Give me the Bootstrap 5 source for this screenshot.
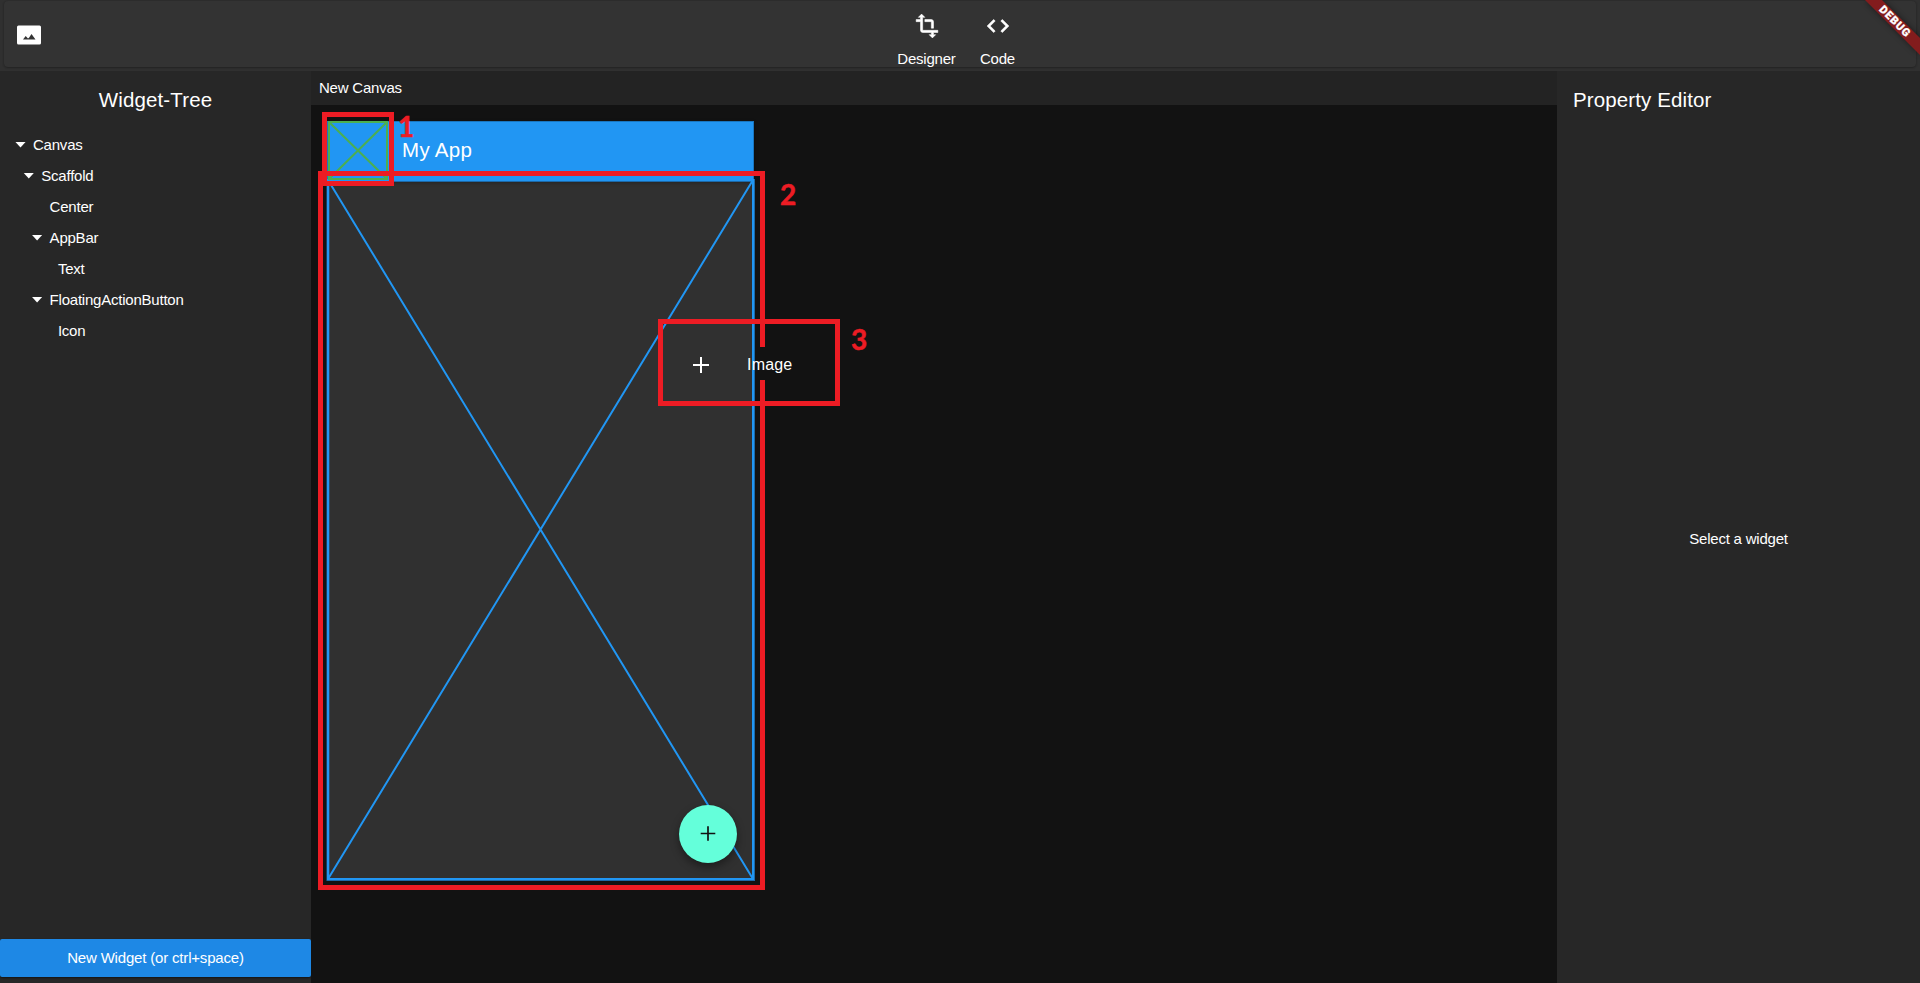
<!DOCTYPE html>
<html lang="en">
<head>
<meta charset="utf-8">
<title>Widget Designer</title>
<link href="https://cdn.jsdelivr.net/npm/bootstrap@5.3.0/dist/css/bootstrap.min.css" rel="stylesheet">
<style>
body{background:#303030;color:#fff;font:15px/20px "Liberation Sans",Arial,sans-serif;letter-spacing:-.22px;}
svg{display:block}
.topbar{height:71px;padding:1px 4px 4px}
.toolbar-card{background:#333;border-radius:4px;box-shadow:0 1px 2px rgba(0,0,0,.22),0 0 2px rgba(0,0,0,.2);padding-left:4px}
.gallery-icon{left:9px;margin-top:.5px}
.tool{padding-top:12px;width:71px}
.tool svg{margin-bottom:10px}
.side{background:#272727}
.left-side{width:311px}
.right-side{width:363px}
.side-title{font-size:20.5px;line-height:24px;letter-spacing:.12px;font-weight:400;padding-top:17px}
.tree-title{margin-bottom:17px}
.property-title{padding-left:16px}
.tree-row{height:31px;line-height:31px;padding-left:calc(15px + var(--lv)*8.3px)}
.caret{width:11px;height:6px;background:#fff;clip-path:polygon(0 0,100% 0,50% 100%);margin-right:7px}
.caret.leaf{visibility:hidden}
.new-widget{height:38px;margin-bottom:6px;background:#1e88e5!important;color:#fff;border:0;border-radius:2px;font:15px/36px "Liberation Sans",Arial,sans-serif;letter-spacing:-.18px;padding:0;box-shadow:0 1px 2px rgba(0,0,0,.5)}
.canvas-head{height:34px;background:#232323;padding:7px 8px}
.stage{background:#121212}
.phone{width:427px;height:759px;margin:16px 0 0 16px;background:#303030}
.app-bar{height:59px;background:#2196f3;font-size:20.5px;line-height:20px;letter-spacing:.3px;padding:0 0 2px 74px;box-shadow:0 2px 4px rgba(0,0,0,.4);border:1px solid #1976c0}
.markup{left:0;top:0}
.fab{right:17px;bottom:17px;width:58px;height:58px;background:#64ffda;box-shadow:0 4px 8px rgba(0,0,0,.4)}
.drag-item{left:381px;top:250px;font-size:16px;gap:37px;letter-spacing:.2px}
.drag-item svg{margin-top:-1px}
.hint{padding-bottom:17px}
.banner{width:80px;height:80px;right:0;top:0}
.note{font:700 28px Lato,"Open Sans",sans-serif;letter-spacing:0}
</style>
<script src="https://cdn.jsdelivr.net/npm/bootstrap@5.3.0/dist/js/bootstrap.bundle.min.js"></script>
</head>
<body class="vh-100 overflow-hidden d-flex flex-column">
<header class="topbar flex-shrink-0">
  <div class="toolbar-card h-100 position-relative d-flex justify-content-center">
    <svg class="gallery-icon position-absolute top-50 translate-middle-y" width="28" height="28" viewBox="0 0 28 28" fill="#fff"><path fill-rule="evenodd" d="M5.500 4.500h21A1.500 1.500 0 0 1 28 6v16a1.500 1.500 0 0 1-1.500 1.500h-21A1.500 1.500 0 0 1 4 22V6a1.500 1.500 0 0 1 1.500-1.500zM10 18.500h12.500l-4-5.500-2.500 3.700-1 .8-2.300-2.500z"/></svg>
    <div class="tool text-center"><svg class="mx-auto" width="26" height="26" viewBox="0 0 24 24" fill="#fff" stroke="#fff" stroke-width=".5"><path d="M22 18v-2H8V4h2L7 1 4 4h2v2H2v2h4v8c0 1.100.9 2 2 2h8v2h-2l3 3 3-3h-2v-2h4zM10 8h6v6h2V8c0-1.100-.9-2-2-2h-6v2z"/></svg>Designer</div>
    <div class="tool text-center"><svg class="mx-auto" width="26" height="26" viewBox="0 0 24 24" fill="#fff" stroke="#fff" stroke-width=".6"><path d="M9.400 16.600 4.800 12l4.600-4.600L8 6l-6 6 6 6 1.400-1.400zm5.200 0 4.600-4.600-4.600-4.600L16 6l6 6-6 6-1.400-1.400z"/></svg>Code</div>
  </div>
</header>
<main class="d-flex flex-grow-1">
  <aside class="side left-side d-flex flex-column">
    <h1 class="side-title tree-title text-center">Widget-Tree</h1>
    <div class="tree-row d-flex align-items-center" style="--lv:0"><span class="caret"></span>Canvas</div>
    <div class="tree-row d-flex align-items-center" style="--lv:1"><span class="caret"></span>Scaffold</div>
    <div class="tree-row d-flex align-items-center" style="--lv:2"><span class="caret leaf"></span>Center</div>
    <div class="tree-row d-flex align-items-center" style="--lv:2"><span class="caret"></span>AppBar</div>
    <div class="tree-row d-flex align-items-center" style="--lv:3"><span class="caret leaf"></span>Text</div>
    <div class="tree-row d-flex align-items-center" style="--lv:2"><span class="caret"></span>FloatingActionButton</div>
    <div class="tree-row d-flex align-items-center" style="--lv:3"><span class="caret leaf"></span>Icon</div>
    <button class="btn new-widget w-100 mt-auto">New Widget (or ctrl+space)</button>
  </aside>
  <section class="flex-grow-1 d-flex flex-column">
    <div class="canvas-head">New Canvas</div>
    <div class="stage flex-grow-1 position-relative">
      <div class="phone position-relative">
        <div class="app-bar d-flex align-items-center">My App</div>
        <svg class="position-absolute top-0 start-0 overflow-visible" width="427" height="759" fill="none" stroke="#2196f3" stroke-width="2"><path stroke="#1d69a8" stroke-width="3" d="M1 59.500H426.500V758.500H1z"/><path d="M1 59H426V758H1zM1 59 426 758M426 59 1 758"/><path stroke="#4caf50" d="M2 1H60V58H2zL60 58M60 1 2 58"/></svg>
        <div class="fab rounded-circle position-absolute d-flex align-items-center justify-content-center"><svg width="24" height="24" viewBox="0 0 24 24" stroke="#111" stroke-width="1.700"><path d="M4.700 11.500h14.600M12 4.200v14.600"/></svg></div>
      </div>
      <svg class="markup position-absolute" width="560" height="800" fill="none" stroke="#ed1c24" stroke-width="5">
        <path d="M13.500 9.500h67v69h-67z"/>
        <path d="M451.500 242V68.500H9.500V782.500H451.500V275"/>
        <path d="M349.500 216.500h177v82h-177z"/>
        <g class="note" fill="#ed1c24" stroke="#ed1c24" stroke-width=".5"><text x="87" y="32">1</text><text x="469" y="100">2</text><text x="540" y="245">3</text></g>
      </svg>
      <div class="drag-item position-absolute d-flex align-items-center"><svg width="18" height="18" stroke="#fff" stroke-width="2"><path d="M1 9h16M9 1v16"/></svg><span>Image</span></div>
    </div>
  </section>
  <aside class="side right-side d-flex flex-column">
    <h2 class="side-title property-title m-0">Property Editor</h2>
    <div class="hint flex-grow-1 d-flex align-items-center justify-content-center">Select a widget</div>
  </aside>
</main>
<svg class="banner position-absolute" viewBox="0 0 80 80"><defs><filter id="sh" x="-50%" y="-50%" width="200%" height="200%"><feGaussianBlur stdDeviation="3"/></filter></defs><path d="M25 0H42L80 38V54z" fill="#000" opacity=".5" filter="url(#sh)"/><path d="M25 0H42L80 38V55z" fill="#831c1d"/><text transform="translate(55.500 21) rotate(45)" text-anchor="middle" y="4.200" fill="#fff" font-family="Roboto,sans-serif" font-weight="900" font-size="11" letter-spacing=".9" stroke="#fff" stroke-width=".3">DEBUG</text></svg>
</body>
</html>
